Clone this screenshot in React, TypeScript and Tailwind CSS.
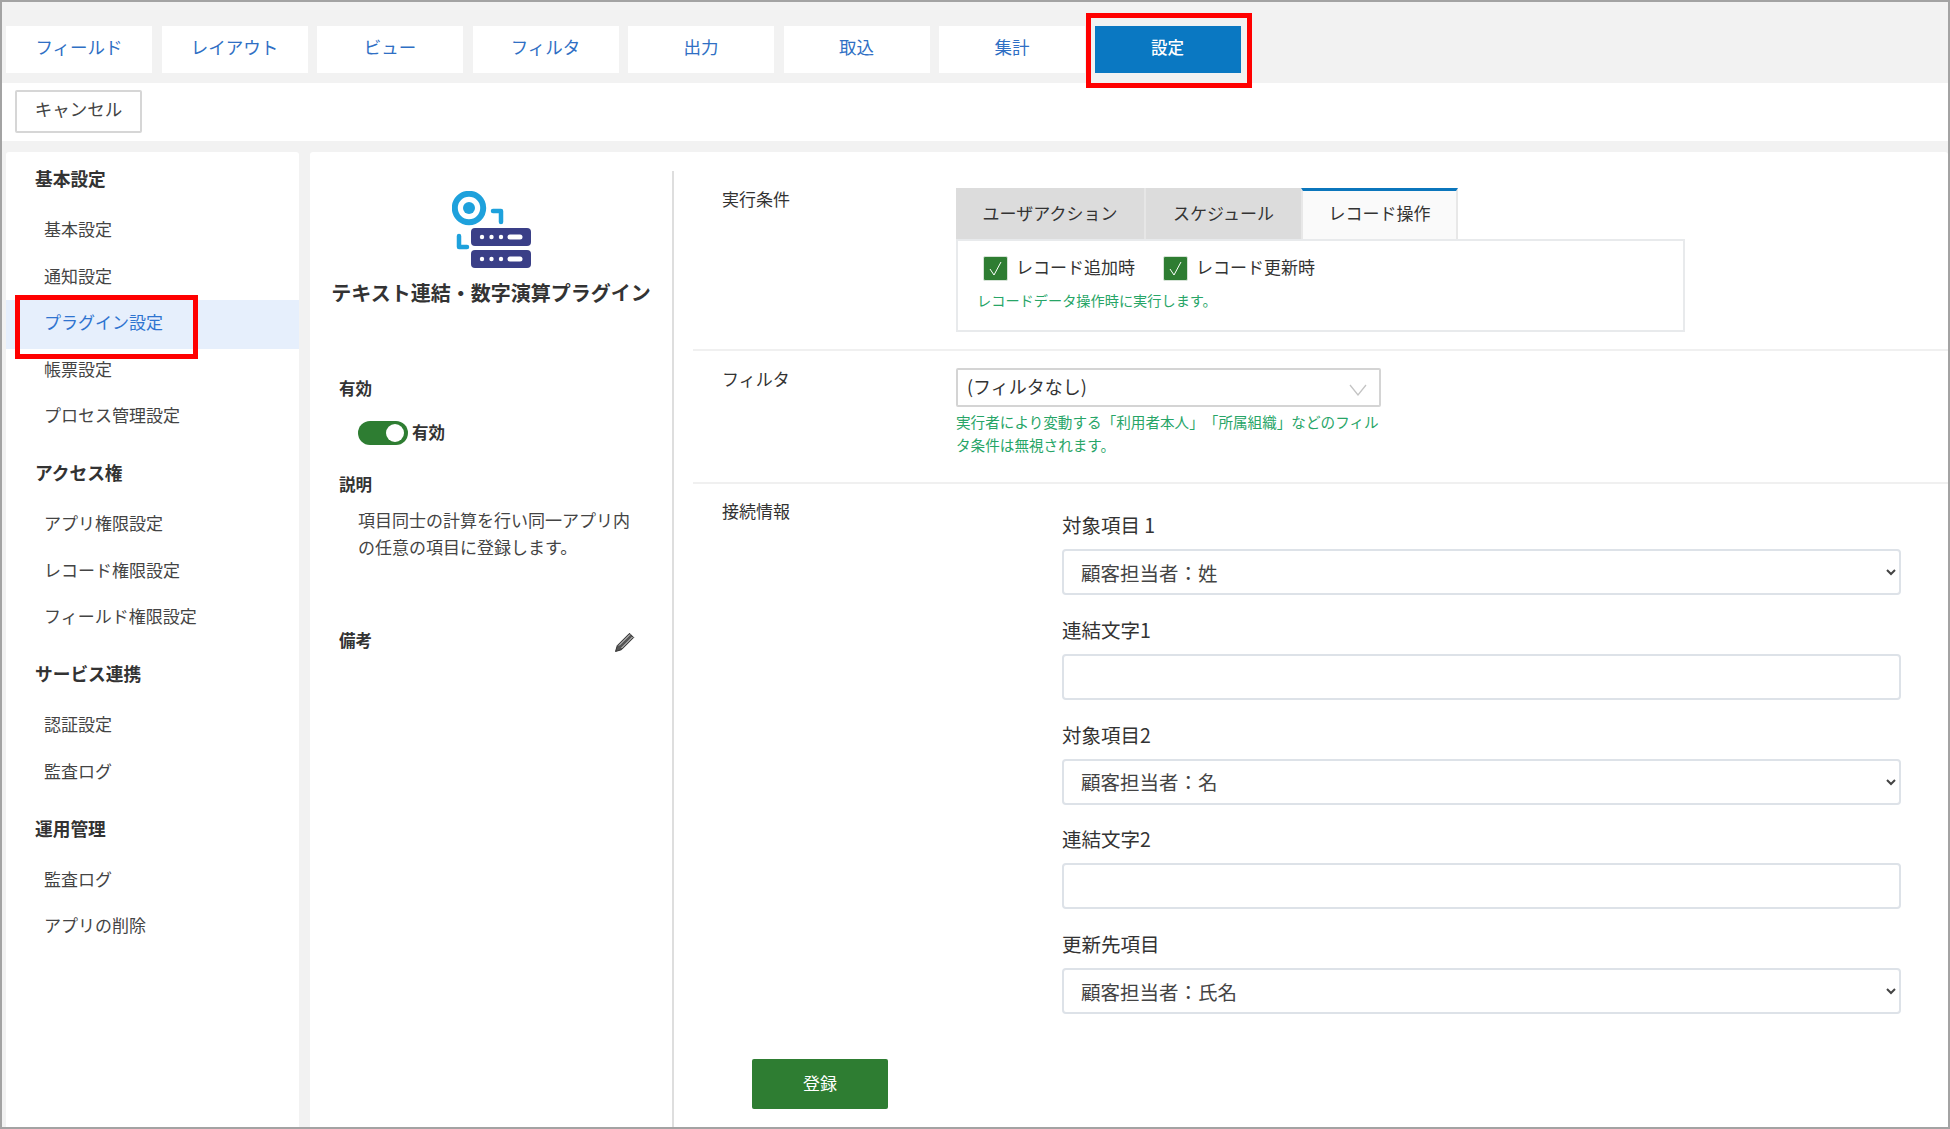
import React from "react";

const topTabs = ["フィールド", "レイアウト", "ビュー", "フィルタ", "出力", "取込", "集計"];

const nav: { title: string; items: string[] }[] = [
  { title: "基本設定", items: ["基本設定", "通知設定", "プラグイン設定", "帳票設定", "プロセス管理設定"] },
  { title: "アクセス権", items: ["アプリ権限設定", "レコード権限設定", "フィールド権限設定"] },
  { title: "サービス連携", items: ["認証設定", "監査ログ"] },
  { title: "運用管理", items: ["監査ログ", "アプリの削除"] },
];

function Check({ label }: { label: string }) {
  return (
    <label className="flex items-center gap-[8px] text-[17px] text-[#333]">
      <span className="flex h-[25px] w-[25px] items-center justify-center rounded-[2px] border border-[#d5e3d6] bg-[#2e7d32]">
        <svg width="17" height="17" viewBox="0 0 17 17" fill="none" stroke="#fff" strokeWidth="1">
          <path d="M3 9l4 6 7-13" />
        </svg>
      </span>
      <span className="pb-[3px] leading-[20px]">{label}</span>
    </label>
  );
}

function Field({ label, value }: { label: string; value?: string }) {
  return (
    <div className="mb-[22.8px]">
      <div className="mb-[12px] h-[24px] pb-[1px] text-[19.5px] leading-[23px] text-[#333]">{label}</div>
      {value ? (
        <select
          defaultValue={value}
          className="block h-[46px] w-full rounded-[4px] border-2 border-[#dde2e8] bg-white pl-[13px] text-[19.5px] text-[#444]"
        >
          <option>{value}</option>
        </select>
      ) : (
        <input className="block h-[46px] w-full rounded-[4px] border-2 border-[#dde2e8] bg-white" />
      )}
    </div>
  );
}

export default function App() {
  return (
    <div className="relative flex h-[1129px] w-[1950px] flex-col overflow-hidden border-2 border-[#a3a3a3] bg-white font-['Noto_Sans_CJK_JP',sans-serif] text-[17px] [text-spacing-trim:space-all]">
      <div className="flex h-[81px] shrink-0 gap-[9.5px] bg-[#f2f2f2] pl-[4px] pt-[24px]">
        {topTabs.map((t) => (
          <div key={t} className="flex h-[47px] w-[146px] items-center justify-center bg-white pb-[5px] text-[17.5px] text-[#2f6fc4]">
            {t}
          </div>
        ))}
        <div className="flex h-[47px] w-[146px] items-center justify-center bg-[#0a78c2] pb-[5px] text-[16.5px] font-medium text-white">
          設定
        </div>
      </div>

      <div className="flex h-[58px] shrink-0 items-start bg-white pl-[13px] pt-[7px]">
        <button className="h-[43px] w-[127px] rounded-[2px] border-2 border-[#d6d6d6] bg-white pb-[4px] text-[17.5px] text-[#444]">
          キャンセル
        </button>
      </div>

      <div className="flex min-h-0 flex-1 gap-[11px] bg-[#f2f2f2] pl-[4px] pt-[11px]">
        <aside className="w-[293px] shrink-0 rounded-t-[3px] bg-white pt-[12px]">
          {nav.map((s, i) => (
            <div key={i} className={i === 0 ? "" : "mt-[19px]"}>
              <div className="mb-[12.5px] h-[30px] pl-[29px] text-[17.7px] font-bold leading-[29px] text-[#333]">{s.title}</div>
              {s.items.map((it) =>
                it === "プラグイン設定" ? (
                  <div key={it} className="-mb-[2.5px] flex h-[49px] items-center bg-[#e6effc] pb-[5px] pl-[38px] text-[#2f74d0]">
                    {it}
                  </div>
                ) : (
                  <div key={it} className="flex h-[46.5px] items-center pb-[1.5px] pl-[38px] text-[#444]">
                    {it}
                  </div>
                ),
              )}
            </div>
          ))}
        </aside>

        <main className="flex min-w-0 flex-1 rounded-t-[3px] bg-white">
          <section className="mt-[19px] w-[364px] shrink-0 border-r-2 border-[#dedede] text-[#333]">
            <svg className="ml-[142px] mt-[20px] block" width="79" height="77" viewBox="0 0 79 77" fill="none">
              <circle cx="17" cy="17" r="14.2" stroke="#1ea1dc" strokeWidth="6" />
              <circle cx="17" cy="17" r="6" fill="#1ea1dc" />
              <path d="M41 20h8v11" stroke="#1ea1dc" strokeWidth="4.5" strokeLinecap="round" strokeLinejoin="round" />
              <path d="M7 45v11h8" stroke="#1ea1dc" strokeWidth="4.5" strokeLinecap="round" strokeLinejoin="round" />
              <rect x="19" y="37" width="60" height="18" rx="4" fill="#3a3f87" />
              <rect x="19" y="59" width="60" height="18" rx="4" fill="#3a3f87" />
              {[46, 68].map((y) => (
                <g key={y} fill="#fff">
                  <circle cx="30" cy={y} r="2.2" />
                  <circle cx="39.5" cy={y} r="2.2" />
                  <circle cx="49" cy={y} r="2.2" />
                  <rect x="55.5" y={y - 2.5} width="15" height="5" rx="2.5" />
                </g>
              ))}
            </svg>
            <div className="mt-[11px] h-[28px] whitespace-nowrap text-center text-[20px] font-bold leading-[28px]">
              テキスト連結・数字演算プラグイン
            </div>
            <div className="ml-[29px] mt-[69px] h-[24px] text-[16.5px] font-bold leading-[24px]">有効</div>
            <div className="ml-[48px] mt-[21px] flex h-[24px] items-center gap-[4px]">
              <span className="flex h-[24px] w-[50px] items-center justify-end rounded-full bg-[#2e7d32] pr-[4px]">
                <span className="h-[18px] w-[18px] rounded-full bg-white" />
              </span>
              <span className="pb-[2px] text-[16.5px] font-bold leading-[20px]">有効</span>
            </div>
            <div className="ml-[29px] mt-[27px] h-[24px] text-[16.5px] font-bold leading-[24px]">説明</div>
            <p className="ml-[48px] mt-[10px] w-[280px] text-[17px] leading-[27px] text-[#444]">
              項目同士の計算を行い同一アプリ内の任意の項目に登録します。
            </p>
            <div className="ml-[29px] mr-[36px] mt-[68px] flex h-[24px] items-center justify-between">
              <span className="text-[16.5px] font-bold">備考</span>
              <svg width="22" height="22" viewBox="0 0 22 22" fill="none" className="mt-[3px]">
                <path d="M1.5 20.5l1.8-6L15.5 2.3l4.2 4.2L7.5 18.7z" fill="#555" stroke="#333" strokeWidth="1" strokeLinejoin="round" />
                <path d="M5 14.5L16 3.5M7.5 17L18.5 6" stroke="#ddd" strokeWidth="1" />
              </svg>
            </div>
          </section>

          <section className="min-w-0 flex-1">
            <div className="ml-[19px] flex h-[199px] border-b-2 border-[#f0f0f0] pl-[29px] pt-[36px] text-[#333]">
              <div className="w-[234px] shrink-0 pb-[6px] leading-[22px]">実行条件</div>
              <div className="w-[729px]">
                <div className="flex h-[51px]">
                  <div className="flex w-[190px] items-center justify-center border-r-2 border-[#e6e6e6] bg-[#dcdcdc] pb-[2px]">ユーザアクション</div>
                  <div className="flex w-[155px] items-center justify-center bg-[#dcdcdc] pb-[2px]">スケジュール</div>
                  <div className="flex w-[157px] items-center justify-center border-x-2 border-t-[3px] border-[#e8e8e8] border-t-[#0b76bc] bg-[#fafafa] pb-[4px]">レコード操作</div>
                </div>
                <div className="h-[93px] border-2 border-[#e8eaec] pl-[19px] pt-[14.5px]">
                  <div className="ml-[6px] flex gap-[28px]">
                    <Check label="レコード追加時" />
                    <Check label="レコード更新時" />
                  </div>
                  <div className="mt-[8.5px] text-[14.2px] leading-[22px] text-[#27a567]">レコードデータ操作時に実行します。</div>
                </div>
              </div>
            </div>

            <div className="ml-[19px] flex h-[133px] border-b-2 border-[#f0f0f0] pl-[29px] pt-[17px] text-[#333]">
              <div className="w-[234px] shrink-0 leading-[22px]">フィルタ</div>
              <div className="w-[425px]">
                <div className="flex h-[39px] items-center justify-between rounded-[2px] border-2 border-[#d4d4d4] pb-[2px] pl-[9px] pr-[12px] text-[18px]">
                  <span>(フィルタなし)</span>
                  <svg width="18" height="12" viewBox="0 0 18 12" fill="none" stroke="#c4c4c4" strokeWidth="1.3" className="mt-[6px]">
                    <path d="M1 1l8 10 8-10" />
                  </svg>
                </div>
                <p className="mt-[3px] text-[14.6px] leading-[23px] text-[#27a567]">
                  実行者により変動する「利用者本人」「所属組織」などのフィルタ条件は無視されます。
                </p>
              </div>
            </div>

            <div className="ml-[19px] flex pl-[29px] pr-[47px]">
              <div className="mt-[15px] h-[24px] w-[340px] shrink-0 leading-[24px] text-[#333]">接続情報</div>
              <div className="mt-[29px] min-w-0 flex-1">
                <Field label="対象項目 1" value="顧客担当者：姓" />
                <Field label="連結文字1" />
                <Field label="対象項目2" value="顧客担当者：名" />
                <Field label="連結文字2" />
                <Field label="更新先項目" value="顧客担当者：氏名" />
              </div>
            </div>
            <button className="ml-[78px] mt-[22.5px] h-[50px] w-[136px] rounded-[2px] bg-[#2e7d32] pb-[3px] text-[17px] text-white">登録</button>
          </section>
        </main>
      </div>

      <div className="pointer-events-none absolute left-[1084px] top-[11px] h-[75px] w-[166px] border-[5px] border-[#ff0000]" />
      <div className="pointer-events-none absolute left-[13px] top-[293px] h-[64px] w-[183px] border-[5px] border-[#ff0000]" />
    </div>
  );
}
